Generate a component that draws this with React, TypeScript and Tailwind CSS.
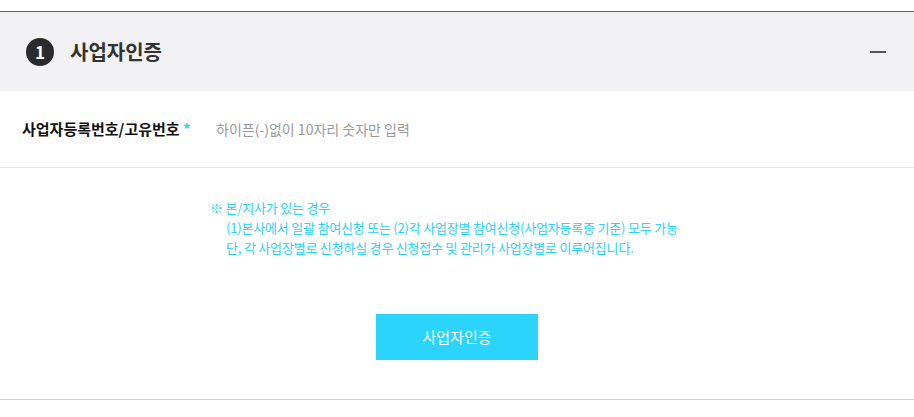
export default function App() {
  return (
    <div className="w-[914px] h-[417px] bg-white pt-[11px] font-['Noto_Sans_CJK_KR','Noto_Sans',sans-serif]">
      <section className="border-t border-[#666] border-b border-b-[#cfcfcf]">
        <div className="flex h-[79px] items-center justify-between bg-[#f2f2f4] pl-[26px] pr-[28px]">
          <div className="flex items-center gap-[16px]">
            <span className="flex h-[28px] w-[28px] items-center justify-center rounded-full bg-[#2b2b2b] text-[17px] font-bold leading-none text-white">
              1
            </span>
            <h2 className="text-[20px] font-bold text-[#333]">사업자인증</h2>
          </div>
          <span className="block h-[2px] w-[16px] bg-[#555]" />
        </div>

        <div className="flex h-[77px] items-center border-b border-[#e8e8e8] pl-[22px]">
          <label className="w-[194px] text-[15px] font-bold text-[#111]">
            사업자등록번호/고유번호 <span className="text-[#2ad2fa]">*</span>
          </label>
          <input
            className="w-[400px] text-[14px] outline-none placeholder:text-[#999]"
            placeholder="하이픈(-)없이 10자리 숫자만 입력"
          />
        </div>

        <div className="flex flex-col items-center pt-[30px] pb-[39px]">
          <div className="ml-[-4px] w-[490px] text-[13px] leading-[20px] tracking-[-0.2px] text-[#2ad2fa]">
            <p>※ 본/지사가 있는 경우</p>
            <p className="pl-[16px]">
              (1)본사에서 일괄 참여신청 또는 (2)각 사업장별 참여신청(사업자등록증 기준) 모두 가능
            </p>
            <p className="pl-[16px]">단, 각 사업장별로 신청하실 경우 신청접수 및 관리가 사업장별로 이루어집니다.</p>
          </div>
          <button className="mt-[56px] h-[46px] w-[162px] bg-[#2ad4fb] text-[15px] text-white">
            사업자인증
          </button>
        </div>
      </section>
    </div>
  );
}
